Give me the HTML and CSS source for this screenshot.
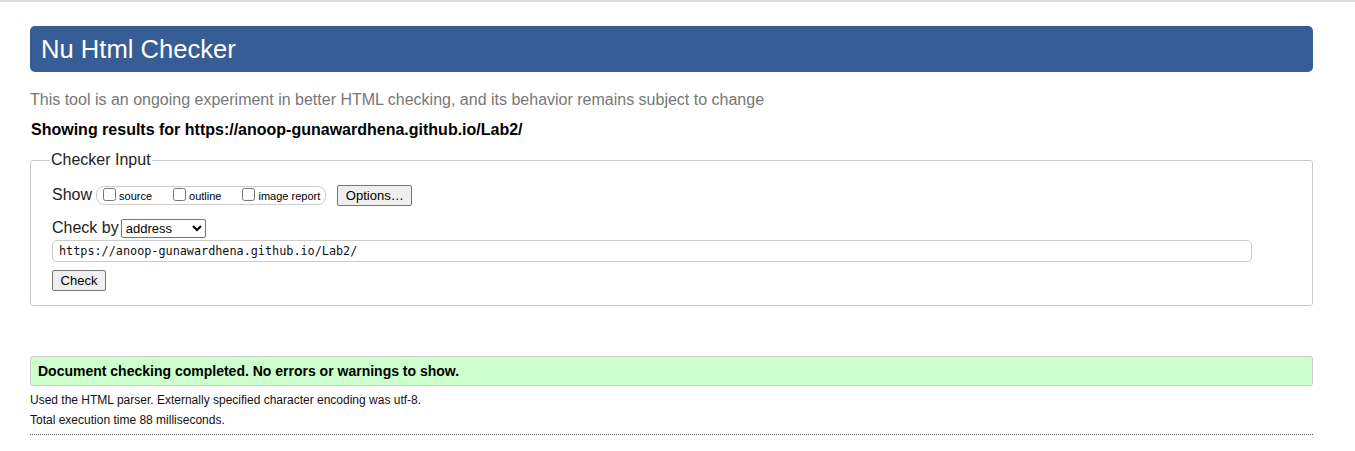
FILE: index.html
```html
<!DOCTYPE html>
<html>
<head>
<meta charset="utf-8">
<title>Nu Html Checker</title>
<link rel="stylesheet" href="styles.css">
</head>
<body>
<div class="topline"></div>
<div class="page">
  <h1 class="title">Nu Html Checker</h1>
  <p class="intro">This tool is an ongoing experiment in better HTML checking, and its behavior remains subject to change</p>
  <p class="showing">Showing results for https://anoop-gunawardhena.github.io/Lab2/</p>
  <fieldset class="input-box">
    <legend class="legend">Checker Input</legend>
    <div class="row show-row">
      <span class="lbl">Show</span>
      <span class="opts">
        <label class="opt opt-source"><input type="checkbox" class="cb">source</label>
        <label class="opt opt-outline"><input type="checkbox" class="cb">outline</label>
        <label class="opt"><input type="checkbox" class="cb">image report</label>
      </span>
      <button class="btn btn-options">Options…</button>
    </div>
    <div class="row by-row">
      <span class="lbl">Check by</span>
      <select class="sel"><option>address</option></select>
    </div>
    <div class="url">https://anoop-gunawardhena.github.io/Lab2/</div>
    <button class="btn btn-check">Check</button>
  </fieldset>
  <div class="success">Document checking completed. No errors or warnings to show.</div>
  <p class="detail detail-first">Used the HTML parser. Externally specified character encoding was utf-8.</p>
  <p class="detail">Total execution time 88 milliseconds.</p>
  <div class="dots"></div>
</div>
</body>
</html>
```
FILE: styles.css
```css
html, body {
  margin: 0;
  padding: 0;
  background: #fff;
  color: #000;
  font-family: "Liberation Sans", Arial, sans-serif;
}
.topline {
  height: 2px;
  background: #dedede;
}
.page {
  margin: 0 42px 0 30px;
  padding-top: 24px;
}
.title {
  margin: 0;
  height: 46px;
  background: #365d95;
  color: #fff;
  border-radius: 5px;
  font-weight: normal;
  font-size: 25.6px;
  line-height: 46px;
  padding: 0 11px;
  box-sizing: border-box;
}
.intro {
  margin: 18px 0 0 0;
  color: #777;
  font-size: 16px;
  line-height: 20px;
}
.showing {
  margin: 10px 0 0 1px;
  font-weight: bold;
  font-size: 16px;
  line-height: 20px;
}
.input-box {
  margin: 11px 0 0 0;
  border: 1px solid #ccc;
  border-radius: 3px;
  padding: 8px 21px 14px 21px;
}
.legend {
  font-size: 16px;
  color: #222;
  padding: 0 1px;
  margin-left: -2px;
}
.row {
  display: flex;
  align-items: center;
}
.lbl {
  font-size: 16px;
  color: #222;
}
.show-row {
  margin-top: 7px;
  height: 22px;
}
.opts {
  display: flex;
  align-items: center;
  margin-left: 4px;
  border: 1px solid #ccc;
  border-radius: 8px;
  height: 17px;
  padding: 0 5px 0 6px;
  font-size: 11px;
}
.opt {
  display: flex;
  align-items: center;
  padding-top: 2px;
}
.opt-source { margin-right: 21px; }
.opt-outline { margin-right: 21px; }
.cb {
  margin: 0 3px 0 0;
  width: 13px;
  height: 13px;
  position: relative;
  top: -2px;
}
.btn {
  font-family: "Liberation Sans", Arial, sans-serif;
  font-size: 13px;
  background: #efefef;
  border: 1px solid #767676;
  border-radius: 2px;
  color: #000;
  padding: 0 6px;
}
.btn-options {
  margin-left: 11px;
  height: 21px;
  width: 75px;
}
.by-row {
  margin-top: 12px;
  height: 20px;
}
.sel {
  margin-left: 2px;
  width: 85px;
  height: 19px;
  font-family: "Liberation Sans", Arial, sans-serif;
  font-size: 13px;
  border: 1px solid #767676;
  border-radius: 2px;
  background: #fff;
}
.url {
  margin-top: 2px;
  width: 1200px;
  height: 22px;
  box-sizing: border-box;
  border: 1px solid #ccc;
  border-radius: 5px;
  font-family: "DejaVu Sans Mono", monospace;
  font-size: 11.8px;
  line-height: 20px;
  padding: 0 6px;
  color: #111;
}
.btn-check {
  display: block;
  margin-top: 8px;
  height: 21px;
  width: 54px;
}
.success {
  margin-top: 50px;
  height: 30px;
  box-sizing: border-box;
  background: #ccffcc;
  border: 1px solid #ccc;
  border-radius: 3px;
  font-weight: bold;
  font-size: 14px;
  line-height: 28px;
  padding: 0 7px;
}
.detail {
  margin: 0;
  font-size: 12px;
  line-height: 20px;
  color: #111;
}
.detail-first { margin-top: 4px; }
.dots {
  margin-top: 4px;
  border-bottom: 1px dotted #555;
}
```
